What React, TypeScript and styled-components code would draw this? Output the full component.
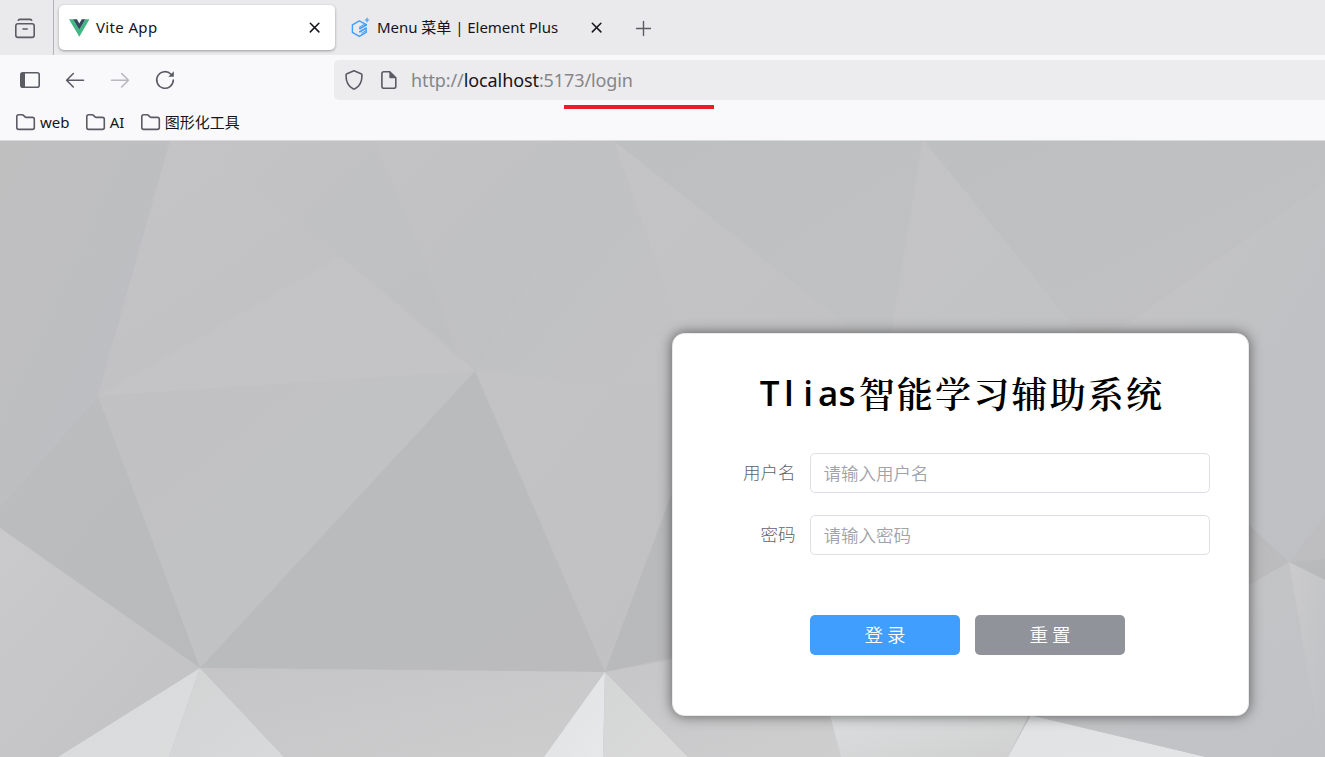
import React from "react";
import styled, { createGlobalStyle, css } from "styled-components";

const uiFont = '"Noto Sans", "Noto Sans CJK SC", sans-serif';
const formFont = '"Noto Sans CJK SC", sans-serif';

const GlobalStyle = createGlobalStyle`
  * { box-sizing: border-box; }
  body { margin: 0; background: #f9f9fb; font-family: ${uiFont}; overflow: hidden; }
  button, input { font: inherit; }
`;

const Browser = styled.div`
  display: flex;
  flex-direction: column;
  width: 100vw;
  height: 100vh;
  min-height: 757px;
`;

const TabStrip = styled.header`
  display: flex;
  flex: none;
  height: 55px;
  background: #eaeaec;
  color: #15141a;
`;

const TabOverview = styled.div`
  width: 54px;
  padding: 15px 0 0 12px;
  border-right: 1px solid #b3b3b7;
  color: #5b5b66;
`;

const Tab = styled.div<{ $active?: boolean }>`
  display: flex;
  align-items: center;
  width: ${(p) => (p.$active ? 276 : 277)}px;
  height: 45px;
  margin: 5px 0 0 5px;
  padding: 0 13px 0 10px;
  border-radius: 5px;
  ${(p) =>
    p.$active &&
    css`
      background: #fff;
      box-shadow: 0 1px 3px rgba(0, 0, 0, 0.35);
    `}
`;

const TabTitle = styled.span<{ $track: number }>`
  flex: 1;
  margin: 0 0 2px 6px;
  font-size: 15px;
  letter-spacing: ${(p) => p.$track}px;
  line-height: 20px;
  white-space: pre;
`;

const NewTab = styled.div`
  margin: 19px 0 0 17px;
  color: #5b5b66;
`;

const NavBar = styled.div`
  display: flex;
  flex: none;
  align-items: center;
  height: 50px;
  color: #5b5b66;
`;

const NavButtons = styled.div`
  display: flex;
  gap: 21px;
  width: 334px;
  padding-left: 18px;
`;

const UrlBar = styled.div`
  position: relative;
  display: flex;
  flex: 1;
  align-items: center;
  height: 40px;
  padding-left: 8px;
  border-radius: 5px 0 0 5px;
  background: #ececee;
`;

const UrlText = styled.span`
  margin-left: 10px;
  color: #85858a;
  font-size: 18px;
  letter-spacing: -0.1px;
  line-height: 24px;
  b { color: #15141a; font-weight: 400; }
`;

const UrlMark = styled.i`
  position: absolute;
  left: 230px;
  top: 45px;
  width: 150px;
  height: 4px;
  background: #ed1c24;
`;

const IconGap = styled.span`
  width: 11px;
`;

const Bookmarks = styled.nav`
  display: flex;
  flex: none;
  gap: 15.3px;
  height: 36px;
  padding: 7px 0 0 15px;
  border-bottom: 1px solid #d9dadc;
  color: #5b5b66;
`;

const Bookmark = styled.span`
  display: flex;
  align-items: center;
  height: 20px;
  gap: 4px;
  color: #15141a;
  font-size: 15px;
  line-height: 20px;
  svg { color: #5b5b66; }
`;

const Page = styled.main`
  position: relative;
  flex: 1;
  overflow: hidden;
  padding: 192px 0 0 672px;
`;

const Backdrop = styled.svg`
  position: absolute;
  left: 0;
  top: 0;
`;

const Card = styled.section`
  position: relative;
  width: 577px;
  height: 383px;
  padding: 37px 38px 0 37px;
  border: 1px solid #eaeaea;
  border-radius: 12.5px;
  background: #fff;
  box-shadow: 0 0 12.5px rgba(0, 0, 0, 0.55);
  font-family: ${formFont};
  font-size: 17.5px;
`;

const Title = styled.h1`
  display: flex;
  justify-content: center;
  margin: 0 0 37px;
  height: 45px;
  padding-left: 4px;
  color: #000;
  font-family: KaiTi, "AR PL UKai CN", "Noto Serif CJK SC", "Noto Sans CJK SC", serif;
  font-size: 36px;
  font-weight: 600;
  letter-spacing: 2.2px;
  line-height: 43px;
`;

const Latin = styled.span`
  display: flex;
  margin-right: 2px;
  font-family: "Open Sans", sans-serif;
  font-size: 35px;
  font-weight: 650;
  letter-spacing: 0;
`;

const LatinCell = styled.span`
  width: 19.4px;
  text-align: center;
`;

const Field = styled.label`
  display: flex;
  align-items: center;
  height: 40px;
  margin-bottom: 22px;
`;

const FieldLabel = styled.span`
  width: 100px;
  padding-right: 14.5px;
  margin-bottom: 4px;
  color: #606266;
  font-weight: 300;
  text-align: right;
  flex: none;
`;

const Input = styled.input`
  width: 400px;
  height: 40px;
  padding: 0 12.5px 2px;
  border: 1px solid #dcdfe6;
  border-radius: 5px;
  outline: none;
  background: #fff;
  &::placeholder { color: #a0a3aa; font-weight: 350; opacity: 1; }
`;

const Actions = styled.div`
  display: flex;
  gap: 15px;
  padding: 38px 0 0 100px;
`;

const Button = styled.button<{ $tone: string }>`
  width: 150px;
  height: 40px;
  padding: 0 0 2px;
  border: 0;
  border-radius: 5px;
  background: ${(p) => p.$tone};
  color: #fff;
  font-size: 18.5px;
  font-weight: 350;
  white-space: pre;
`;

const Svg = ({ w, h = w, children, ...rest }: any) => (
  <svg width={w} height={h} viewBox={`0 0 ${w} ${h}`} fill="none" stroke="currentColor" strokeWidth={1.6} strokeLinecap="round" strokeLinejoin="round" {...rest}>
    {children}
  </svg>
);

const CloseIcon = () => (
  <Svg w={15}><path d="M3.3 3.3l8.6 8.6M11.9 3.3l-8.6 8.6" strokeWidth={1.5} /></Svg>
);

const FolderIcon = () => (
  <Svg w={21} h={20}>
    <path d="M1.8 15.5V4.7c0-1.1.8-1.9 1.9-1.9h3.4c.6 0 1 .2 1.4.6l1.5 1.5c.3.3.7.5 1.2.5h6.2c1.1 0 1.9.8 1.9 1.9v8.2c0 1.1-.8 1.9-1.9 1.9H3.7c-1.1 0-1.9-.8-1.9-1.9z" />
  </Svg>
);

// Each facet: vertices, then the colours at its start and end along the diagonal.
const facets: [string, string, string][] = [
  ["0,0 170,0 98,255 0,366", "#bfbfc0", "#bdbec2"],
  ["170,0 375,0 425,122 475,230 340,115 98,255", "#c4c4c6", "#c0c0c2"],
  ["375,0 425,122 457,211 393,157 340,115 221,24 240,0", "#c3c3c5", "#bebfc1"],
  ["340,115 475,230 98,255", "#c3c3c5", "#c4c4c6"],
  ["375,0 612,0 475,230 425,122", "#c3c3c5", "#bebfc1"],
  ["612,0 672,165 690,260 475,230", "#bfc0c2", "#c3c3c5"],
  ["614,0 845,182 888,260 690,260 672,165", "#c4c4c6", "#c1c1c3"],
  ["614,0 921,0 888,199 845,182", "#bdbfc0", "#bfc1c3"],
  ["923,0 1058,157 1126,184 1100,260 880,260", "#c4c4c6", "#c1c2c4"],
  ["925,0 1325,0 1325,42 1126,184 1085,200", "#bebfc0", "#c1c1c3"],
  ["1325,42 1325,374 1289,421 1249,380 1100,220 1126,184", "#c4c4c6", "#bfc0c3"],
  ["475,230 583,241 700,250 672,352 605,531", "#c3c3c5", "#c1c1c3"],
  ["98,255 475,230 200,527", "#c1c1c3", "#c2c3c4"],
  ["0,366 98,255 200,527 0,387", "#bdbdbf", "#b8babb"],
  ["475,230 605,531 200,527", "#b9bbbc", "#bbbbbd"],
  ["690,285 672,352 605,531 750,500", "#b9babb", "#b9b9bb"],
  ["0,387 200,527 58,616 0,616", "#cacacc", "#c2c2c5"],
  ["200,527 169,616 58,616", "#d6d8da", "#dcdede"],
  ["200,527 284,616 169,616", "#d2d4d4", "#d8d9da"],
  ["200,527 605,531 544,616 284,616", "#c5c5c7", "#cdcdce"],
  ["605,531 603,616 544,616", "#dfe1e3", "#e7e8e9"],
  ["605,531 688,616 603,616", "#d4d5d5", "#dadada"],
  ["605,531 672,519 830,570 841,616 688,616", "#c6c6c8", "#cececf"],
  ["829,570 1031,570 1008,616 841,616", "#dcdedf", "#d0d0d0"],
  ["1031,574 1206,616 1008,616", "#e0e2e4", "#e3e4e5"],
  ["1029,574 1248,440 1289,421 1313,560 1325,616 1206,616", "#c5c5c7", "#c1c2c5"],
  ["1248,383 1289,421 1248,445", "#bababc", "#bdbdbf"],
  ["1289,421 1325,374 1325,418", "#bfbfc2", "#bdbdc0"],
  ["1289,421 1325,418 1325,439", "#babbbd", "#b7b8ba"],
  ["1289,421 1325,439 1325,616 1313,560", "#cbcbcd", "#c0c1c4"],
];

const PolyBackdrop = () => (
  <Backdrop width="1325" height="616" viewBox="0 0 1325 616" preserveAspectRatio="none">
    <defs>
      {facets.map(([, from, to], i) => (
        <linearGradient key={i} id={`facet${i}`} x1="0" y1="0" x2="1" y2="1">
          <stop offset="0" stopColor={from} />
          <stop offset="1" stopColor={to} />
        </linearGradient>
      ))}
    </defs>
    <rect width="1325" height="616" fill="#c1c1c3" />
    {facets.map(([points], i) => (
      <polygon key={i} points={points} fill={`url(#facet${i})`} />
    ))}
  </Backdrop>
);

export default function App() {
  return (
    <Browser>
      <GlobalStyle />
      <TabStrip>
        <TabOverview>
          <Svg w={26}>
            <rect x={3.8} y={8.8} width={18.4} height={13.6} rx={2.2} />
            <path d="M6.3 5.2q.7-.8 1.7-.8h10q1 0 1.7.8M11 14h4.2" />
          </Svg>
        </TabOverview>
        <Tab $active>
          <Svg w={21} h={18} stroke="none">
            <path d="M0 .3h4.2l6.1 10.500L16.400.3h4.100L10.300 17.700z" fill="#41b883" />
            <path d="M4.100.3h3.800l2.400 4.100L12.700.3h3.700l-6.100 10.500z" fill="#35495e" />
          </Svg>
          <TabTitle $track={0.35}>Vite App</TabTitle>
          <CloseIcon />
        </Tab>
        <Tab>
          <Svg w={21} h={22} stroke="#409eff" strokeWidth={1.4}>
            <path d="M16.3 7.7L9.3 3.9 2.4 7.8v7.6l6.9 4 6.9-4v-1.9" />
            <path d="M16.2 8.1L9.8 11.7M16.2 11.2L9.8 14.8" strokeWidth={1.7} />
            <path d="M14.7 7.1L9.2 10.2M16.2 11v2.7l-4.5 2.5" strokeWidth={1} />
            <path d="M17 1.2v3.6M15.2 3h3.6" strokeWidth={1.2} />
          </Svg>
          <TabTitle $track={-0.03}>Menu 菜单 | Element Plus</TabTitle>
          <CloseIcon />
        </Tab>
        <NewTab><Svg w={19}><path d="M9.5 2.5v14M2.5 9.5h14" strokeWidth={1.4} /></Svg></NewTab>
      </TabStrip>

      <NavBar>
        <NavButtons>
          <Svg w={24}>
            <rect x={2.8} y={4.8} width={18.4} height={14.4} rx={2} />
            <path d="M3 5h4v14H3z" fill="currentColor" stroke="none" />
          </Svg>
          <Svg w={24}><path d="M20.5 12.3H3.8M10.3 5.5l-6.7 6.8 6.7 6.7" /></Svg>
          <Svg w={24} opacity={0.4}><path d="M3.5 12.3h16.7M13.7 5.5l6.7 6.8-6.7 6.7" /></Svg>
          <Svg w={24}>
            <path d="M18 6.2A8.3 8.3 0 1 0 20.3 12" />
            <path d="M20.8 3.2v5.6h-5.5z" fill="currentColor" stroke="none" />
          </Svg>
        </NavButtons>
        <UrlBar>
          <Svg w={24}><path d="M12 2.8l7 2.9q1 .4 1 1.5c0 6.5-2.5 11.2-7 13.5q-1 .5-2 0C6.5 18.4 4 13.7 4 7.2q0-1.1 1-1.5z" /></Svg>
          <IconGap />
          <Svg w={24}>
            <path d="M12.8 3.8H6.9q-2 0-2 2v12.5q0 2 2 2h9.9q2 0 2-2V9.7z" />
            <path d="M12.3 3.3v5.9q0 1 1 1h5.9z" fill="currentColor" stroke="none" />
          </Svg>
          <UrlText>http://<b>localhost</b>:5173/login</UrlText>
          <UrlMark />
        </UrlBar>
      </NavBar>

      <Bookmarks>
        {["web", "AI", "图形化工具"].map((name) => (
          <Bookmark key={name}><FolderIcon />{name}</Bookmark>
        ))}
      </Bookmarks>

      <Page>
        <PolyBackdrop />
        <Card>
          <Title>
            <Latin>{[..."Tlias"].map((c) => <LatinCell key={c}>{c}</LatinCell>)}</Latin>
            智能学习辅助系统
          </Title>
          <Field><FieldLabel>用户名</FieldLabel><Input placeholder="请输入用户名" /></Field>
          <Field><FieldLabel>密码</FieldLabel><Input type="password" placeholder="请输入密码" /></Field>
          <Actions>
            <Button $tone="#409eff">登 录</Button>
            <Button $tone="#909399">重 置</Button>
          </Actions>
        </Card>
      </Page>
    </Browser>
  );
}
